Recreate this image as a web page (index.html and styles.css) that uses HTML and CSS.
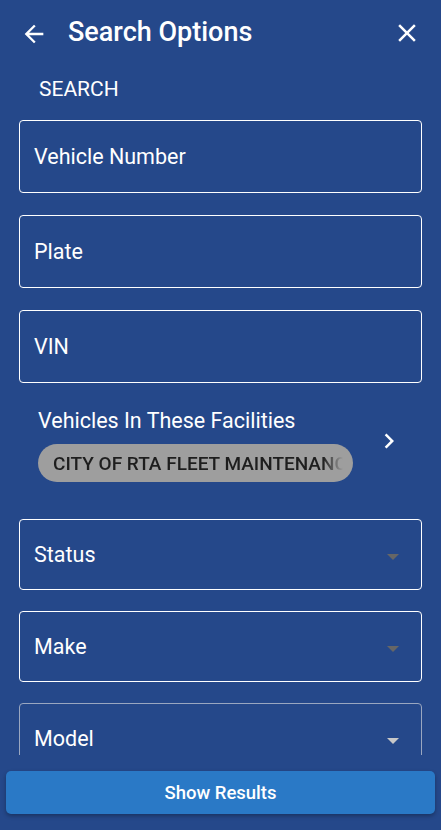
FILE: index.html
```html
<!DOCTYPE html>
<html lang="en">
<head>
  <meta charset="UTF-8">
  <meta name="viewport" content="width=device-width, initial-scale=1.0">
  <title>Search Options</title>
  <link rel="stylesheet" href="styles.css">
</head>
<body>
  <div class="screen">
    <div class="header">
      <svg class="icon-back" width="28" height="28" viewBox="0 0 24 24">
        <path d="M20 11H7.83l5.59-5.59L12 4l-8 8 8 8 1.41-1.41L7.83 13H20v-2z" fill="#fff"/>
      </svg>
      <h1 class="title">Search Options</h1>
      <svg class="icon-close" width="30" height="30" viewBox="0 0 24 24">
        <path d="M19 6.41L17.59 5 12 10.59 6.41 5 5 6.41 10.59 12 5 17.59 6.41 19 12 13.41 17.59 19 19 17.59 13.41 12z" fill="#fff"/>
      </svg>
    </div>

    <div class="content">
      <div class="section-label">SEARCH</div>

      <div class="field"><span>Vehicle Number</span></div>
      <div class="field"><span>Plate</span></div>
      <div class="field"><span>VIN</span></div>

      <div class="facilities">
        <div class="facilities-info">
          <div class="facilities-label">Vehicles In These Facilities</div>
          <div class="chip"><span>CITY OF RTA FLEET MAINTENANCE</span></div>
        </div>
        <svg class="icon-chevron" width="30" height="30" viewBox="0 0 24 24">
          <path d="M10 6L8.59 7.41 13.17 12l-4.58 4.59L10 18l6-6z" fill="#fff"/>
        </svg>
      </div>

      <div class="field select"><span>Status</span><i class="caret"></i></div>
      <div class="field select"><span>Make</span><i class="caret"></i></div>
      <div class="field select muted"><span>Model</span><i class="caret"></i></div>
    </div>

    <div class="footer">
      <button class="btn">Show Results</button>
    </div>
  </div>
</body>
</html>
```

FILE: styles.css
```css
body {
  margin: 0;
  padding: 0;
  background: #25488a;
  font-family: Roboto, "Noto Sans", Arial, sans-serif;
  color: #fff;
}
.screen {
  height: 830px;
  display: flex;
  flex-direction: column;
}
.header {
  height: 66px;
  display: flex;
  align-items: center;
  padding: 0 19px 0 20px;
}
.icon-back {
  flex: none;
  margin-top: 1px;
}
.title {
  flex: 1;
  margin: 0 0 2px 20px;
  font-size: 27px;
  font-weight: 500;
}
.icon-close {
  flex: none;
}
.content {
  height: 689px;
  overflow: hidden;
  padding: 0 19px;
}
.section-label {
  font-size: 21px;
  padding: 11px 0 0 20px;
  height: 43px;
}
.field {
  height: 71px;
  border: 1px solid #fff;
  border-radius: 4px;
  display: flex;
  align-items: center;
  padding: 0 14px;
  font-size: 21.5px;
  margin-bottom: 22px;
}
.field span {
  flex: 1;
}
.select {
  height: 69px;
  margin-bottom: 21px;
}
.caret {
  width: 0;
  height: 0;
  border-left: 6px solid transparent;
  border-right: 6px solid transparent;
  border-top: 6px solid #666;
  margin-right: 8px;
  margin-top: 4px;
}
.muted {
  border-color: #9aa7c0;
}
.muted .caret {
  border-top-color: #c8c8c8;
}
.facilities {
  display: flex;
  align-items: flex-start;
  padding: 3px 18px 37px 19px;
}
.facilities-info {
  flex: 1;
}
.facilities-label {
  font-size: 21.5px;
  margin-bottom: 11px;
}
.chip {
  width: 315px;
  height: 38px;
  border-radius: 19px;
  background: #9e9e9e;
  color: #1e1e1e;
  font-size: 19px;
  font-weight: 500;
  display: flex;
  align-items: center;
  padding-left: 15px;
  box-sizing: border-box;
  overflow: hidden;
  white-space: nowrap;
}
.chip span {
  overflow: hidden;
  width: 290px;
  -webkit-mask-image: linear-gradient(to right, #000 93%, transparent);
}
.icon-chevron {
  flex: none;
  margin-top: 18px;
}
.footer {
  padding: 16px 6px 0;
}
.btn {
  display: block;
  width: 100%;
  height: 43px;
  border: none;
  border-radius: 5px;
  background: #2a79c6;
  color: #fff;
  font-family: inherit;
  font-size: 18.5px;
  font-weight: 500;
  box-shadow: 0 2px 4px rgba(0, 0, 0, 0.3);
}
```
